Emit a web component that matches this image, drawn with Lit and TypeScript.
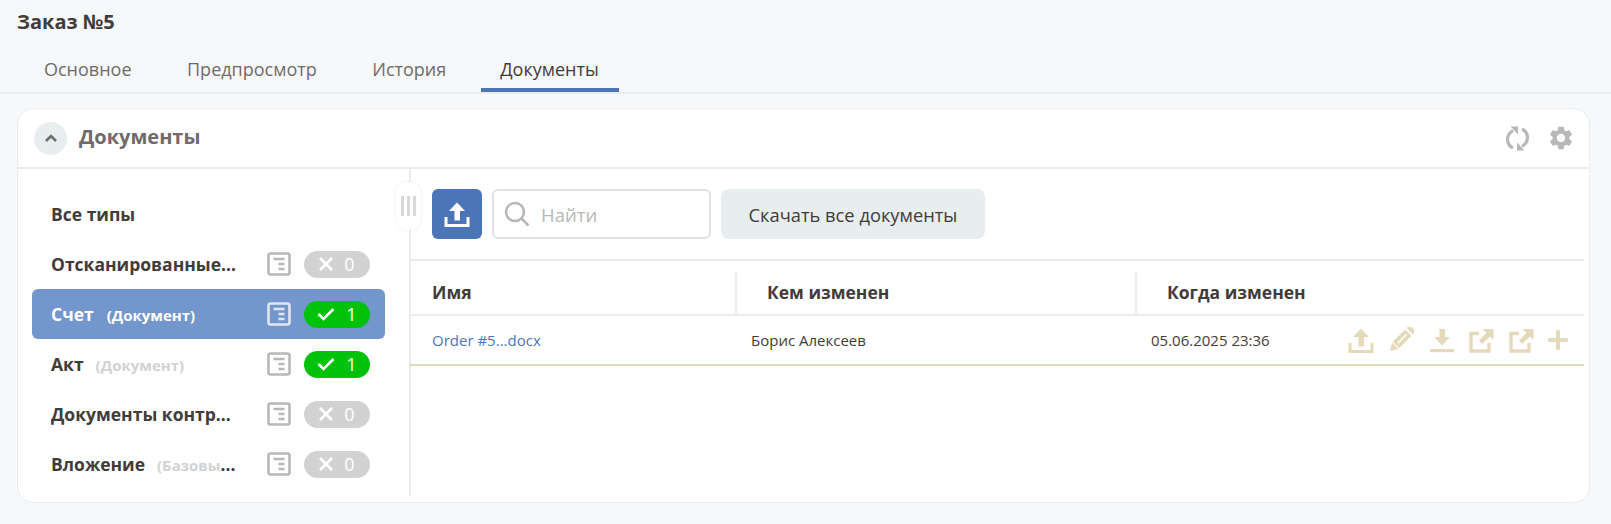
import { LitElement, html, css, svg } from 'lit';
import { customElement } from 'lit/decorators.js';

const docIcon = html`<svg class="doc" width="24" height="24" viewBox="0 0 24 24" fill="none" stroke="currentColor" stroke-width="2.6">
  <rect x="1.5" y="1.5" width="21" height="21" rx="2"></rect>
  <path d="M6.5 7h11M11.5 12h6M11.5 17h6" stroke-width="2.4"></path>
</svg>`;

const uploadPath = svg`<path d="M2 15v8.5h22V15" fill="none" stroke="currentColor" stroke-width="3"></path>
  <path d="M13 0.5 L21 9 H16 V18.5 H10.5 V9 H5 Z" fill="currentColor"></path>`;

const externalIcon = html`<svg width="25" height="25" viewBox="0 0 25 25">
  <path d="M10 5.5H2v17.5h18V15" fill="none" stroke="currentColor" stroke-width="3.4"></path>
  <path d="M13.5 1H24.5v11l-3.6-3.6-7.6 7.6-3.4-3.4 7.6-7.6z" fill="currentColor"></path>
</svg>`;

interface DocType {
  name: string;
  note?: string;
  count?: number;
  active?: boolean;
}

const TYPES: DocType[] = [
  { name: 'Все типы' },
  { name: 'Отсканированные документы', count: 0 },
  { name: 'Счет', note: '(Документ)', count: 1, active: true },
  { name: 'Акт', note: '(Документ)', count: 1 },
  { name: 'Документы контрагента', count: 0 },
  { name: 'Вложение', note: '(Базовый тип)', count: 0 },
];

@customElement('app-root')
export class AppRoot extends LitElement {
  static styles = css`
    :host {
      display: block;
      height: 524px;
      background: #f7f8fa;
      font-family: 'Open Sans', 'Noto Sans', sans-serif;
      color: #413c3a;
      overflow: hidden;
    }

    .title {
      height: 44px;
      padding-left: 17px;
      font-size: 20px;
      font-weight: 700;
      line-height: 44px;
    }

    .tabs {
      display: flex;
      height: 48px;
      padding-left: 16px;
      border-bottom: 2px solid #e9edf0;
    }

    .tab {
      padding: 0 27.5px 0 28px;
      font-size: 18px;
      line-height: 50px;
      color: #6f6b69;
    }

    .tab.active {
      color: #413c3a;
      font-weight: 500;
      padding: 0 20px 0 19.5px;
      border-bottom: 4px solid #4c75b8;
      border-radius: 2px 2px 0 0;
      height: 44px;
      margin-left: 7px;
    }

    .card {
      position: relative;
      margin: 14px 21px 0 17px;
      height: 393px;
      background: #fff;
      border: 1px solid #e9edf0;
      border-radius: 16px;
    }

    .card-head {
      display: flex;
      align-items: center;
      height: 58px;
      padding: 0 14px 0 16px;
      border-bottom: 2px solid #e9edf0;
    }

    .collapse {
      display: flex;
      align-items: center;
      justify-content: center;
      width: 33px;
      height: 33px;
      border-radius: 50%;
      background: #e8edf0;
      color: #6f6b69;
      margin-right: 12px;
    }

    .card-title {
      flex: 1;
      padding-bottom: 4px;
      font-size: 20px;
      font-weight: 700;
      color: #6f6b69;
    }

    .head-tools {
      display: flex;
      align-items: center;
      gap: 17px;
      color: #b8b8b8;
    }

    .body {
      display: flex;
      height: 327px;
    }

    .side {
      box-sizing: border-box;
      width: 393px;
      height: 100%;
      padding: 20px 24px 0 14px;
      border-right: 2px solid #e9edf0;
      flex: none;
    }

    .row {
      display: flex;
      align-items: center;
      height: 50px;
      padding: 0 15px 0 19px;
      border-radius: 6px;
      font-size: 17.5px;
      font-weight: 700;
      box-sizing: border-box;
    }

    .row.active {
      background: #7396cc;
      color: #fff;
    }

    .label {
      flex: 1;
      min-width: 0;
      margin-right: 30px;
      white-space: nowrap;
      overflow: hidden;
      text-overflow: ellipsis;
    }

    .note {
      margin-left: 12px;
      font-size: 15px;
      color: #d2d2d2;
    }

    .row.active .note {
      color: #fff;
      margin-left: 13px;
    }

    .doc {
      flex: none;
      color: #b8b8b8;
      margin-right: 13px;
    }

    .row.active .doc {
      color: #dfe7f3;
    }

    .badge {
      flex: none;
      display: flex;
      align-items: center;
      justify-content: center;
      gap: 11px;
      width: 66px;
      height: 27px;
      border-radius: 14px;
      background: #d2d2d2;
      color: #fff;
      font-size: 18px;
      font-weight: 400;
    }

    .badge.ok {
      background: #00c20a;
    }

    .handle {
      position: absolute;
      left: 378px;
      top: 73px;
      display: flex;
      align-items: center;
      justify-content: center;
      gap: 3px;
      width: 25px;
      height: 48px;
      background: #fff;
      border-radius: 10px;
      box-shadow: 0 0 3px rgba(0, 0, 0, 0.08);
    }

    .handle i {
      width: 3px;
      height: 20px;
      background: #d8d8d8;
    }

    .main {
      flex: 1;
      min-width: 0;
    }

    .toolbar {
      display: flex;
      gap: 10px;
      height: 50px;
      padding: 20px 0 20px 21px;
    }

    .upload {
      display: flex;
      align-items: center;
      justify-content: center;
      width: 50px;
      border-radius: 6px;
      background: #4c75b8;
      color: #fff;
    }

    .search {
      display: flex;
      align-items: center;
      box-sizing: border-box;
      width: 219px;
      padding-left: 10px;
      border: 2px solid #dde2e6;
      border-radius: 6px;
      color: #b8b8b8;
      font-size: 18.5px;
    }

    .search svg {
      margin-right: 11px;
    }

    .all {
      display: flex;
      align-items: center;
      justify-content: center;
      width: 264px;
      border-radius: 8px;
      background: #e8edf0;
      font-size: 18.3px;
      font-weight: 500;
    }

    .table-head,
    .table-row {
      display: grid;
      grid-template-columns: 326px 400px 1fr;
      margin: 0 5px 0 -2px;
    }

    .table-head {
      height: 43px;
      padding-top: 10px;
      border-top: 2px solid #e9edf0;
      border-bottom: 2px solid #e9edf0;
      font-size: 17.5px;
      font-weight: 700;
      line-height: 43px;
    }

    .table-head div {
      padding-left: 30px;
      border-left: 2px solid #e9edf0;
    }

    .table-head div:first-child {
      padding-left: 23px;
      border-left: none;
    }

    .table-row {
      position: relative;
      height: 48px;
      align-items: center;
      border-bottom: 2px solid #e4d9b9;
      font-size: 15px;
    }

    .table-row > div {
      padding-left: 16px;
    }

    .table-row > div:first-child {
      padding-left: 23px;
      color: #4c75b8;
    }

    .actions {
      position: absolute;
      right: 16px;
      top: 11px;
      display: flex;
      align-items: center;
      gap: 14.5px;
      color: #e4d9b9;
    }
  `;

  private renderRow(t: DocType) {
    return html`
      <div class="row ${t.active ? 'active' : ''}">
        <div class="label">${t.name}${t.note ? html`<span class="note">${t.note}</span>` : ''}</div>
        ${t.count === undefined
          ? ''
          : html`
              ${docIcon}
              <div class="badge ${t.count > 0 ? 'ok' : ''}">
                ${t.count > 0
                  ? html`<svg width="18" height="14" viewBox="0 0 18 14" fill="none" stroke="#fff" stroke-width="2.6"><path d="M1.5 7l5 5L16.5 2"></path></svg>`
                  : html`<svg width="14" height="14" viewBox="0 0 14 14" fill="none" stroke="#fff" stroke-width="2.6"><path d="M1 1l12 12M13 1L1 13"></path></svg>`}
                <span>${t.count}</span>
              </div>
            `}
      </div>
    `;
  }

  render() {
    return html`
      <div class="title">Заказ №5</div>
      <div class="tabs">
        <div class="tab">Основное</div>
        <div class="tab">Предпросмотр</div>
        <div class="tab">История</div>
        <div class="tab active">Документы</div>
      </div>

      <div class="card">
        <div class="card-head">
          <div class="collapse">
            <svg width="14" height="10" viewBox="0 0 14 10" fill="none" stroke="currentColor" stroke-width="2.6"><path d="M2 8l5-5 5 5"></path></svg>
          </div>
          <div class="card-title">Документы</div>
          <div class="head-tools">
            <svg width="25" height="25" viewBox="0 0 25 25" fill="none" stroke="currentColor" stroke-width="3.2">
              <path d="M8 4.5C0.5 9 1 18.5 8 22"></path>
              <path d="M17 20.5C24.5 16 24 6.5 17 3"></path>
              <path d="M5.5 0.5h7.5v8z" fill="currentColor" stroke="none"></path>
              <path d="M19.5 24.5h-7.5v-8z" fill="currentColor" stroke="none"></path>
            </svg>
            <svg width="28" height="28" viewBox="0 0 24 24" fill="currentColor">
              <path d="M19.14 12.94c.04-.3.06-.61.06-.94 0-.32-.02-.64-.07-.94l2.03-1.58c.18-.14.23-.41.12-.61l-1.92-3.32c-.12-.22-.37-.29-.59-.22l-2.39.96c-.5-.38-1.03-.7-1.62-.94l-.36-2.54c-.04-.24-.24-.41-.48-.41h-3.84c-.24 0-.43.17-.47.41l-.36 2.54c-.59.24-1.13.57-1.62.94l-2.39-.96c-.22-.08-.47 0-.59.22L2.74 8.87c-.12.21-.08.47.12.61l2.03 1.58c-.05.3-.09.63-.09.94s.02.64.07.94l-2.03 1.58c-.18.14-.23.41-.12.61l1.92 3.32c.12.22.37.29.59.22l2.39-.96c.5.38 1.03.7 1.62.94l.36 2.54c.05.24.24.41.48.41h3.84c.24 0 .44-.17.47-.41l.36-2.54c.59-.24 1.13-.56 1.62-.94l2.39.96c.22.08.47 0 .59-.22l1.92-3.32c.12-.22.07-.47-.12-.61l-2.01-1.58zM12 15.6c-1.98 0-3.6-1.62-3.6-3.6s1.62-3.6 3.6-3.6 3.6 1.62 3.6 3.6-1.62 3.6-3.6 3.6z"></path>
            </svg>
          </div>
        </div>

        <div class="body">
          <div class="side">${TYPES.map((t) => this.renderRow(t))}</div>
          <div class="main">
            <div class="toolbar">
              <div class="upload">
                <svg width="26" height="25" viewBox="0 0 26 25">${uploadPath}</svg>
              </div>
              <div class="search">
                <svg width="26" height="26" viewBox="0 0 26 26" fill="none" stroke="currentColor" stroke-width="2.6">
                  <circle cx="11" cy="11" r="9"></circle>
                  <path d="M17.5 17.5l7 7"></path>
                </svg>
                Найти
              </div>
              <div class="all">Скачать все документы</div>
            </div>
            <div class="table-head">
              <div>Имя</div>
              <div>Кем изменен</div>
              <div>Когда изменен</div>
            </div>
            <div class="table-row">
              <div>Order #5...docx</div>
              <div>Борис Алексеев</div>
              <div>05.06.2025 23:36</div>
              <div class="actions">
                <svg width="26" height="25" viewBox="0 0 26 25">${uploadPath}</svg>
                <svg width="26" height="26" viewBox="0 0 26 26" fill="currentColor">
                  <g transform="rotate(45 13 13)">
                    <rect x="8.5" y="-3.5" width="9" height="4" rx="1"></rect>
                    <path d="M8.5 2.6h9v17.4h-9z"></path>
                    <path d="M8.5 21.2h9l-4.5 7.3z"></path>
                    <path d="M13 5v12.5" stroke="#fff" stroke-width="1.5"></path>
                  </g>
                </svg>
                <svg width="26" height="25" viewBox="0 0 26 25" fill="currentColor">
                  <path d="M10.5 1h5.5v8h5L13 17.5 5 9h5.5z"></path>
                  <rect x="1" y="21" width="24" height="3.2"></rect>
                </svg>
                ${externalIcon} ${externalIcon}
                <svg width="20" height="20" viewBox="0 0 20 20" fill="currentColor">
                  <rect x="8" y="0" width="4" height="20" rx="1.5"></rect>
                  <rect x="0" y="8" width="20" height="4" rx="1.5"></rect>
                </svg>
              </div>
            </div>
          </div>
        </div>
        <div class="handle"><i></i><i></i><i></i></div>
      </div>
    `;
  }
}
